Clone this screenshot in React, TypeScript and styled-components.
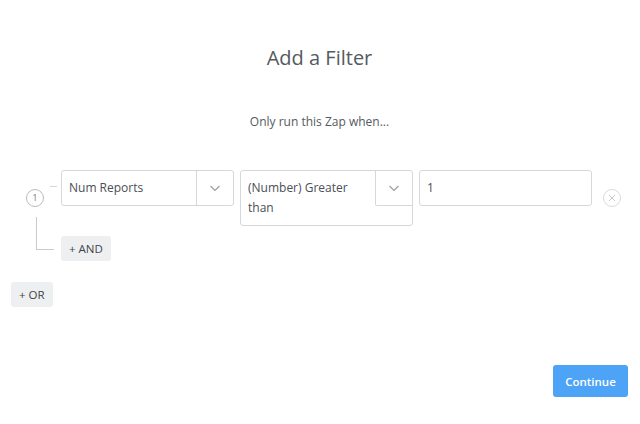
import React from "react";
import styled, { createGlobalStyle } from "styled-components";

const GlobalStyle = createGlobalStyle`
  html, body {
    margin: 0;
    padding: 0;
    background: #ffffff;
  }
  body {
    font-family: "Open Sans", "Liberation Sans", sans-serif;
    color: #555555;
  }
  * { box-sizing: border-box; }
`;

const Page = styled.div`
  width: 640px;
  height: 424px;
  display: flex;
  flex-direction: column;
  padding: 0 12px 0 11px;
`;

const Title = styled.h1`
  margin: 44px 0 0;
  font-size: 20px;
  line-height: 28px;
  font-weight: 400;
  color: #555a60;
  text-align: center;
`;

const Subtitle = styled.p`
  margin: 41px 0 0;
  font-size: 12px;
  line-height: 18px;
  color: #555a60;
  text-align: center;
`;

const FilterRow = styled.div`
  display: flex;
  align-items: flex-start;
  margin-top: 39px;
`;

const Gutter = styled.div`
  position: relative;
  width: 50px;
  flex: none;
  align-self: stretch;
`;

const RowGutter = styled(Gutter)`
  &::after {
    content: "";
    position: absolute;
    left: 39px;
    top: 16px;
    width: 7px;
    height: 1px;
    background: #d4d6d9;
  }
`;

const AndGutter = styled(Gutter)`
  &::before {
    content: "";
    position: absolute;
    left: 25px;
    top: -19px;
    width: 17px;
    height: 32px;
    border-left: 1px solid #c9cbce;
    border-bottom: 1px solid #c9cbce;
  }
`;

const StepBadge = styled.div`
  width: 18px;
  height: 18px;
  margin: 19px 0 0 15px;
  border: 1px solid #b9bcc0;
  border-radius: 50%;
  display: flex;
  align-items: center;
  justify-content: center;
  font-size: 8.5px;
  line-height: 1;
  color: #6f7378;
`;

const Fields = styled.div`
  display: flex;
  align-items: flex-start;
  gap: 6px;
`;

const SelectBox = styled.div`
  width: 173px;
  border: 1px solid #d5d7da;
  border-radius: 3px;
  background: #fff;
  overflow: hidden;
`;

const Caret = styled.div<{ $wrapped?: boolean }>`
  float: right;
  width: 37px;
  height: ${(p) => (p.$wrapped ? "35px" : "34px")};
  border-left: 1px solid #d5d7da;
  border-bottom: ${(p) => (p.$wrapped ? "1px solid #d5d7da" : "none")};
  border-bottom-left-radius: ${(p) => (p.$wrapped ? "2px" : "0")};
  display: flex;
  align-items: center;
  justify-content: center;
  padding-top: ${(p) => (p.$wrapped ? "1px" : "0")};
`;

const SelectText = styled.div`
  padding: 7px 7px 7px;
  font-size: 12px;
  line-height: 20px;
  color: #4a4f55;
`;

const TextInput = styled.div`
  width: 173px;
  height: 36px;
  border: 1px solid #d5d7da;
  border-radius: 3px;
  padding: 7px 7px 7px;
  font-size: 12px;
  line-height: 20px;
  color: #4a4f55;
`;

const RemoveButton = styled.div`
  width: 18px;
  height: 18px;
  margin: 19px 0 0 11px;
  border: 1px solid #dadcdf;
  border-radius: 50%;
  display: flex;
  align-items: center;
  justify-content: center;
`;

const AndRow = styled.div`
  display: flex;
  margin-top: 10px;
`;

const GhostButton = styled.button`
  height: 25px;
  padding: 0 8px;
  border: none;
  border-radius: 3px;
  background: #eeeff1;
  font-family: "Open Sans", "Liberation Sans", sans-serif;
  font-size: 11.5px;
  color: #3f4449;
  cursor: pointer;
`;

const OrRow = styled.div`
  display: flex;
  margin-top: 21px;
`;

const Footer = styled.div`
  display: flex;
  justify-content: flex-end;
  margin-top: 58px;
`;

const PrimaryButton = styled.button`
  width: 75px;
  height: 32px;
  border: none;
  border-radius: 3px;
  background: #4da3f5;
  color: #ffffff;
  font-family: "Open Sans", "Liberation Sans", sans-serif;
  font-size: 11.5px;
  font-weight: 600;
  cursor: pointer;
`;

const Chevron = () => (
  <svg width="12" height="7" viewBox="0 0 12 7" fill="none">
    <path d="M1.5 1l4.5 4.5L10.5 1" stroke="#9a9ea3" strokeWidth="1.2" />
  </svg>
);

const Cross = () => (
  <svg width="8" height="8" viewBox="0 0 8 8" fill="none">
    <path d="M1 1l6 6M7 1L1 7" stroke="#c3c7cc" strokeWidth="1" />
  </svg>
);

export default function App() {
  return (
    <>
      <GlobalStyle />
      <Page>
        <Title>Add a Filter</Title>
        <Subtitle>Only run this Zap when...</Subtitle>
        <FilterRow>
          <RowGutter>
            <StepBadge>1</StepBadge>
          </RowGutter>
          <Fields>
            <SelectBox>
              <Caret>
                <Chevron />
              </Caret>
              <SelectText>Num Reports</SelectText>
            </SelectBox>
            <SelectBox>
              <Caret $wrapped>
                <Chevron />
              </Caret>
              <SelectText>(Number) Greater than</SelectText>
            </SelectBox>
            <TextInput>1</TextInput>
          </Fields>
          <RemoveButton>
            <Cross />
          </RemoveButton>
        </FilterRow>
        <AndRow>
          <AndGutter />
          <GhostButton>+ AND</GhostButton>
        </AndRow>
        <OrRow>
          <GhostButton>+ OR</GhostButton>
        </OrRow>
        <Footer>
          <PrimaryButton>Continue</PrimaryButton>
        </Footer>
      </Page>
    </>
  );
}
